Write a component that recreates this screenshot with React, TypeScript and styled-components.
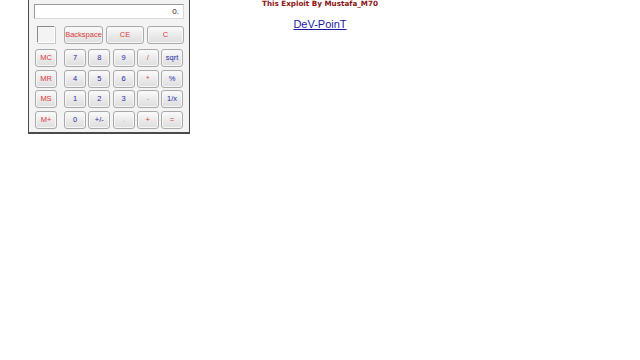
import React from "react";
import styled, { createGlobalStyle } from "styled-components";

const Global = createGlobalStyle`
  *, *::before, *::after { box-sizing: border-box; }
  html, body { margin: 0; padding: 0; background: #ffffff; }
  body { width: 640px; height: 360px; overflow: hidden; font-family: "Liberation Sans", Arial, sans-serif; }
`;

const Page = styled.div`
  display: grid;
  grid-template-columns: 640px;
  align-items: start;
`;

const Header = styled.div`
  grid-area: 1 / 1;
  justify-self: center;
  display: flex;
  flex-direction: column;
  align-items: center;
  margin-top: 0;
`;

const Title = styled.div`
  font-family: "DejaVu Sans", "Liberation Sans", sans-serif;
  font-weight: bold;
  font-size: 7.2px;
  line-height: 8px;
  color: #8a1414;
`;

const Link = styled.a`
  margin-top: 10px;
  font-family: "Liberation Sans", Arial, sans-serif;
  font-size: 11px;
  line-height: 13px;
  color: #1a1a9c;
  text-decoration: underline;
`;

const Window = styled.div`
  grid-area: 1 / 1;
  justify-self: start;
  margin-left: 28px;
  width: 162px;
  background: #f3f3f3;
  border-left: 1px solid #4a4a4a;
  border-right: 1px solid #4a4a4a;
  border-bottom: 2px solid #4a4a4a;
  padding: 4px 5px 3px 5px;
  display: flex;
  flex-direction: column;
`;

const Display = styled.div`
  height: 15px;
  background: #ffffff;
  border: 1px solid #9a9a9a;
  border-right-color: #d8d8d8;
  border-bottom-color: #d8d8d8;
  display: flex;
  align-items: center;
  justify-content: flex-end;
  padding-right: 4px;
  font-size: 8px;
  color: #222;
`;

const TopRow = styled.div`
  margin-top: 7px;
  display: flex;
  align-items: flex-start;
`;

const Indicator = styled.div`
  margin-left: 3px;
  width: 18px;
  height: 17px;
  border: 1px solid #8a8a8a;
  border-right-color: #ffffff;
  border-bottom-color: #ffffff;
  box-shadow: 1px 1px 0 #c8c8c8;
`;

const Actions = styled.div`
  margin-left: auto;
  display: flex;
  gap: 3px;
`;

const Key = styled.button<{ $tone: "red" | "blue" | "gray"; $w?: number }>`
  width: ${(p) => p.$w ?? 22}px;
  height: 18px;
  padding: 0;
  margin: 0;
  border: 1px solid #a9a9a9;
  border-radius: 3px;
  background: linear-gradient(#fbfbfb, #e9e9e9 55%, #dedede);
  box-shadow: inset 0 0 0 1px #f7f7f7;
  font-family: "Liberation Sans", Arial, sans-serif;
  font-size: 7.5px;
  line-height: 16px;
  color: ${(p) => (p.$tone === "red" ? "#d83a3a" : p.$tone === "blue" ? "#2828a8" : "#9a9a9a")};
  display: flex;
  align-items: center;
  justify-content: center;
`;

const Keypad = styled.div`
  margin-top: 5px;
  padding-left: 1px;
  display: flex;
  gap: 7px;
`;

const MemCol = styled.div`
  display: grid;
  grid-auto-rows: 18px;
  row-gap: 2.67px;
`;

const Digits = styled.div`
  display: grid;
  grid-template-columns: repeat(5, 22px);
  grid-auto-rows: 18px;
  column-gap: 2.25px;
  row-gap: 2.67px;
`;

type Tone = "red" | "blue" | "gray";
const mem: string[] = ["MC", "MR", "MS", "M+"];
const keys: [string, Tone][] = [
  ["7", "blue"], ["8", "blue"], ["9", "blue"], ["/", "red"], ["sqrt", "blue"],
  ["4", "blue"], ["5", "blue"], ["6", "blue"], ["*", "red"], ["%", "blue"],
  ["1", "blue"], ["2", "blue"], ["3", "blue"], ["-", "gray"], ["1/x", "blue"],
  ["0", "blue"], ["+/-", "blue"], [".", "gray"], ["+", "red"], ["=", "red"],
];

export default function App() {
  return (
    <>
      <Global />
      <Page>
        <Window>
          <Display>0.</Display>
          <TopRow>
            <Indicator />
            <Actions>
              <Key $tone="red" $w={39}>Backspace</Key>
              <Key $tone="red" $w={38}>CE</Key>
              <Key $tone="red" $w={37}>C</Key>
            </Actions>
          </TopRow>
          <Keypad>
            <MemCol>
              {mem.map((m) => (
                <Key key={m} $tone="red">{m}</Key>
              ))}
            </MemCol>
            <Digits>
              {keys.map(([k, t]) => (
                <Key key={k} $tone={t}>{k}</Key>
              ))}
            </Digits>
          </Keypad>
        </Window>
        <Header>
          <Title>This Exploit By Mustafa_M70</Title>
          <Link href="#">DeV-PoinT</Link>
        </Header>
      </Page>
    </>
  );
}
